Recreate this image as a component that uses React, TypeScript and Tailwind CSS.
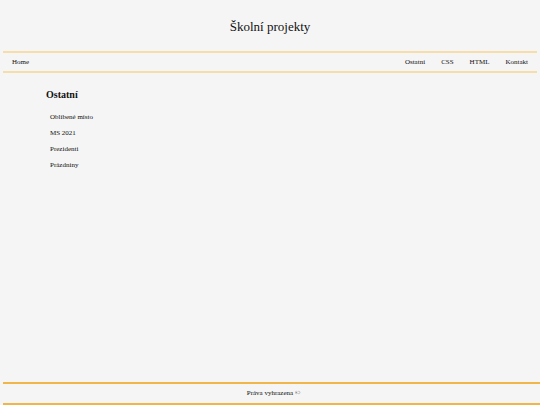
export default function App() {
  const navRight = ["Ostatní", "CSS", "HTML", "Kontakt"];
  const items = ["Oblíbené místo", "MS 2021", "Prezidenti", "Prázdniny"];

  return (
    <div className="flex h-[405px] flex-col overflow-hidden bg-[#f5f5f5] font-['Liberation_Serif',serif] text-[#111]">
      <header className="flex h-[51px] items-center justify-center pt-[2px]">
        <h1 className="text-[13px] leading-none">Školní projekty</h1>
      </header>

      <nav className="mx-[3px] flex h-[22px] items-center justify-between border-y-2 border-[#f7ddaa] px-[9px] text-[7px]">
        <a>Home</a>
        <ul className="flex gap-[16px]">
          {navRight.map((item) => (
            <li key={item}>{item}</li>
          ))}
        </ul>
      </nav>

      <main className="flex-1 pl-[46px] pt-[17px]">
        <h2 className="text-[10px] font-bold leading-none">Ostatní</h2>
        <ul className="mt-[14px] space-y-[9px] pl-[4px] text-[7px] leading-[7px]">
          {items.map((item) => (
            <li key={item}>{item}</li>
          ))}
        </ul>
      </main>

      <footer className="ml-[3px] flex h-[23px] items-center justify-center border-y-2 border-[#f1b64a] pl-[4px] text-[7px]">
        Práva vyhrazena ©
      </footer>
    </div>
  );
}
